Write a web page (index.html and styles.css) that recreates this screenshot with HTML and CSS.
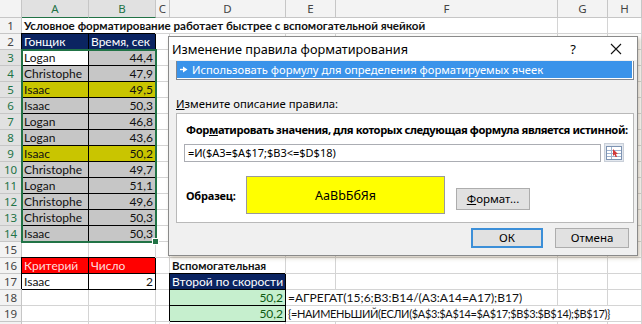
FILE: index.html
```html
<!DOCTYPE html>
<html lang="ru">
<head>
    <meta charset="UTF-8">
    <title>Изменение правила форматирования</title>
    <link rel="stylesheet" href="styles.css">
</head>
<body>
    <div class="wrap">
        <div class="sheet">
            <!-- column headers -->
            <div class="ch corner"></div>
            <div class="ch sel">A</div>
            <div class="ch sel">B</div>
            <div class="ch">C</div>
            <div class="ch">D</div>
            <div class="ch">E</div>
            <div class="ch">F</div>
            <div class="ch">G</div>
            <div class="ch">H</div>

            <!-- 1 -->
            <div class="rh">1</div>
            <div class="c bold heading span6">Условное форматирование работает быстрее с вспомогательной ячейкой</div>
            <div class="c"></div><div class="c"></div>

            <!-- 2 -->
            <div class="rh">2</div>
            <div class="c bd navy">Гонщик</div>
            <div class="c bd navy">Время, сек</div>
            <div class="c"></div><div class="c"></div><div class="c"></div><div class="c"></div><div class="c"></div><div class="c"></div>

            <!-- 3 -->
            <div class="rh on">3</div>
            <div class="c bd">Logan</div>
            <div class="c bd gray num">44,4</div>
            <div class="c"></div><div class="c"></div><div class="c"></div><div class="c"></div><div class="c"></div><div class="c"></div>

            <div class="rh on">4</div>
            <div class="c bd gray">Christophe</div>
            <div class="c bd gray num">47,9</div>
            <div class="c"></div><div class="c"></div><div class="c"></div><div class="c"></div><div class="c"></div><div class="c"></div>

            <div class="rh on">5</div>
            <div class="c bd hit">Isaac</div>
            <div class="c bd hit num">49,5</div>
            <div class="c"></div><div class="c"></div><div class="c"></div><div class="c"></div><div class="c"></div><div class="c"></div>

            <div class="rh on">6</div>
            <div class="c bd gray">Isaac</div>
            <div class="c bd gray num">50,3</div>
            <div class="c"></div><div class="c"></div><div class="c"></div><div class="c"></div><div class="c"></div><div class="c"></div>

            <div class="rh on">7</div>
            <div class="c bd gray">Logan</div>
            <div class="c bd gray num">46,8</div>
            <div class="c"></div><div class="c"></div><div class="c"></div><div class="c"></div><div class="c"></div><div class="c"></div>

            <div class="rh on">8</div>
            <div class="c bd gray">Logan</div>
            <div class="c bd gray num">43,6</div>
            <div class="c"></div><div class="c"></div><div class="c"></div><div class="c"></div><div class="c"></div><div class="c"></div>

            <div class="rh on">9</div>
            <div class="c bd hit">Isaac</div>
            <div class="c bd hit num">50,2</div>
            <div class="c"></div><div class="c"></div><div class="c"></div><div class="c"></div><div class="c"></div><div class="c"></div>

            <div class="rh on">10</div>
            <div class="c bd gray">Christophe</div>
            <div class="c bd gray num">49,7</div>
            <div class="c"></div><div class="c"></div><div class="c"></div><div class="c"></div><div class="c"></div><div class="c"></div>

            <div class="rh on">11</div>
            <div class="c bd gray">Logan</div>
            <div class="c bd gray num">51,1</div>
            <div class="c"></div><div class="c"></div><div class="c"></div><div class="c"></div><div class="c"></div><div class="c"></div>

            <div class="rh on">12</div>
            <div class="c bd gray">Christophe</div>
            <div class="c bd gray num">49,6</div>
            <div class="c"></div><div class="c"></div><div class="c"></div><div class="c"></div><div class="c"></div><div class="c"></div>

            <div class="rh on">13</div>
            <div class="c bd gray">Christophe</div>
            <div class="c bd gray num">50,3</div>
            <div class="c"></div><div class="c"></div><div class="c"></div><div class="c"></div><div class="c"></div><div class="c"></div>

            <div class="rh on">14</div>
            <div class="c bd gray">Isaac</div>
            <div class="c bd gray num">50,3</div>
            <div class="c"></div><div class="c"></div><div class="c"></div><div class="c"></div><div class="c"></div><div class="c"></div>

            <!-- 15 -->
            <div class="rh">15</div>
            <div class="c"></div><div class="c"></div><div class="c"></div><div class="c"></div><div class="c"></div><div class="c"></div><div class="c"></div><div class="c"></div>

            <!-- 16 -->
            <div class="rh">16</div>
            <div class="c bd red">Критерий</div>
            <div class="c bd red">Число</div>
            <div class="c"></div>
            <div class="c bold">Вспомогательная</div>
            <div class="c"></div><div class="c"></div><div class="c"></div><div class="c"></div>

            <!-- 17 -->
            <div class="rh">17</div>
            <div class="c bd">Isaac</div>
            <div class="c bd num">2</div>
            <div class="c"></div>
            <div class="c bd navy">Второй по скорости</div>
            <div class="c"></div><div class="c"></div><div class="c"></div><div class="c"></div>

            <!-- 18 -->
            <div class="rh">18</div>
            <div class="c"></div><div class="c"></div><div class="c"></div>
            <div class="c bd good num">50,2</div>
            <div class="c span2">=АГРЕГАТ(15;6;B3:B14/(A3:A14=A17);B17)</div>
            <div class="c"></div><div class="c"></div>

            <!-- 19 -->
            <div class="rh">19</div>
            <div class="c"></div><div class="c"></div><div class="c"></div>
            <div class="c bd good num">50,2</div>
            <div class="c span4 long">{=НАИМЕНЬШИЙ(ЕСЛИ($A$3:$A$14=$A$17;$B$3:$B$14);$B$17)}</div>

            <!-- 20 -->
            <div class="rh"></div>
            <div class="c"></div><div class="c"></div><div class="c"></div><div class="c"></div><div class="c"></div><div class="c"></div><div class="c"></div><div class="c"></div>
        </div>

        <div class="selection"><span class="handle"></span></div>

        <div class="dialog">
            <div class="titlebar">
                <span class="title">Изменение правила форматирования</span>
                <span class="help">?</span>
                <svg class="close" width="12" height="12" viewBox="0 0 12 12">
                    <path d="M1 1 L11 11 M11 1 L1 11" stroke="#111" stroke-width="1.1" fill="none"/>
                </svg>
            </div>
            <div class="body">
                <div class="listbox">
                    <div class="rule-item">
                        <svg class="arrow" width="8" height="7" viewBox="0 0 8 7">
                            <path d="M0 3.5 H4" stroke="#fff" stroke-width="1.4"/>
                            <path d="M3 0.5 L7.5 3.5 L3 6.5 Z" fill="#fff"/>
                        </svg>
                        Использовать формулу для определения форматируемых ячеек
                    </div>
                </div>
                <div class="caption"><u>И</u>змените описание правила:</div>
                <div class="panel">
                    <div class="panel-label">Фор<u>м</u>атировать значения, для которых следующая формула является истинной:</div>
                    <div class="formula-row">
                        <div class="formula">=И($A3=$A$17;$B3&lt;=$D$18)</div>
                        <div class="pick">
                            <svg width="16" height="14" viewBox="0 0 16 14">
                                <rect x="0.5" y="0.5" width="15" height="13" fill="#fff" stroke="#7d93b2"/>
                                <path d="M1 4.5 H15 M1 7.5 H15 M1 10.5 H15 M5.5 1 V13" stroke="#9fb3cf" stroke-width="1"/>
                                <path d="M7 3 L12 8 L10 8 L11 11 L9.5 11 L8.5 8.5 L7 10 Z" fill="#d23a3a"/>
                            </svg>
                        </div>
                    </div>
                    <div class="sample-row">
                        <span class="sample-label">Образец:</span>
                        <div class="sample">AaBbБбЯя</div>
                        <div class="btn format"><u>Ф</u>ормат...</div>
                    </div>
                </div>
                <div class="buttons">
                    <div class="btn ok">ОК</div>
                    <div class="btn cancel">Отмена</div>
                </div>
            </div>
        </div>
    </div>
</body>
</html>
```

FILE: styles.css
```css
body {
    margin: 0;
    background: #ffffff;
    overflow: hidden;
}

.wrap {
    position: relative;
    width: 642px;
    height: 324px;
    overflow: hidden;
}

/* ---------- sheet ---------- */

.sheet {
    display: grid;
    grid-template-columns: 22px 67px 67px 14px 116px 50px 222px 50px 1fr;
    grid-template-rows: 18px;
    grid-auto-rows: 16px;
    font-family: Lato, "Noto Sans", sans-serif;
    font-size: 12px;
    color: #111111;
}

.ch, .rh, .c {
    box-sizing: border-box;
    border-right: 1px solid #d4d4d4;
    border-bottom: 1px solid #d4d4d4;
    white-space: nowrap;
    overflow: hidden;
}

.ch {
    background: #f3f3f3;
    border-color: #c6c6c6;
    color: #444444;
    text-align: center;
    font-family: "Noto Sans", sans-serif;
    font-size: 11.5px;
    line-height: 17px;
}

.ch.sel {
    background: #e1e1e1;
    color: #217346;
    border-bottom: 1px solid #217346;
}

.rh {
    background: #f3f3f3;
    border-color: #c6c6c6;
    color: #444444;
    text-align: center;
    font-family: "Noto Sans", sans-serif;
    font-size: 11.5px;
    line-height: 15px;
}

.rh.on {
    background: #e1e1e1;
    color: #217346;
}

.c {
    padding: 0 2px;
    line-height: 15px;
}

.bold {
    font-weight: bold;
    font-size: 11.5px;
}

.num { text-align: right; }

.heading {
    font-size: 11.6px;
}

.long {
    font-size: 11px;
    letter-spacing: -0.35px;
}

.span6 { grid-column: span 6; }
.span4 { grid-column: span 4; }
.span2 { grid-column: span 2; }

/* bordered table cells */
.bd {
    border-right: 1px solid #000;
    border-bottom: 1px solid #000;
    box-shadow: -1px -1px 0 #000;
}

.navy { background: #0b2461; color: #ffffff; }
.gray { background: #c6c6c6; }
.hit { background: #c9c500; }
.red { background: #ff0000; color: #ffdcdc; }
.good { background: #c6efce; color: #0f5a12; }

.selection {
    position: absolute;
    left: 21px;
    top: 49px;
    width: 136px;
    height: 194px;
    box-sizing: border-box;
    border: 2px solid #217346;
}

.handle {
    position: absolute;
    right: -4px;
    bottom: -4px;
    width: 5px;
    height: 5px;
    background: #217346;
    border: 1px solid #ffffff;
}

/* ---------- dialog ---------- */

.dialog {
    position: absolute;
    left: 168px;
    top: 36px;
    width: 470px;
    height: 220px;
    box-sizing: border-box;
    border: 1px solid #8a8a8a;
    background: #f0f0f0;
    box-shadow: 2px 2px 4px rgba(120, 100, 60, 0.35);
    font-family: "Noto Sans", sans-serif;
    font-size: 11.5px;
    color: #000;
    display: flex;
    flex-direction: column;
}

.titlebar {
    height: 23px;
    background: #ffffff;
    display: flex;
    align-items: center;
    padding-left: 3px;
}

.title {
    flex: 1;
    font-size: 12.7px;
}

.help {
    font-size: 13px;
    margin-right: 34px;
}

.close {
    margin-right: 15px;
}

.body {
    flex: 1;
    padding: 1px 3px 0 7px;
    display: flex;
    flex-direction: column;
}

.listbox {
    height: 19px;
    box-sizing: border-box;
    border: 1px solid #828790;
    border-top: none;
    background: #ffffff;
}

.rule-item {
    height: 17px;
    margin-right: 1px;
    background: #3a93ea;
    color: #ffffff;
    line-height: 17px;
    padding-left: 3px;
    font-size: 11.2px;
    white-space: nowrap;
    display: flex;
    align-items: center;
    gap: 4px;
}

.caption {
    margin-top: 16px;
    line-height: 16px;
    font-size: 11.3px;
}

.panel {
    margin-top: 1px;
    height: 110px;
    box-sizing: border-box;
    border: 1px solid #b9b9b9;
    background: #ffffff;
    padding: 8px 0 0 7px;
}

.panel-label {
    margin-left: 2px;
    font-weight: bold;
    line-height: 16px;
    white-space: nowrap;
    font-size: 11.2px;
    letter-spacing: -0.4px;
}

.formula-row {
    display: flex;
    gap: 3px;
    margin-top: 6px;
}

.formula {
    width: 417px;
    height: 18px;
    box-sizing: border-box;
    border: 1px solid #abadb3;
    padding-left: 3px;
    line-height: 16px;
    font-size: 11px;
}

.pick {
    width: 20px;
    height: 19px;
    margin-top: -1px;
    box-sizing: border-box;
    border: 1px solid #c9cfd8;
    background: #e3e8ef;
    display: flex;
    align-items: center;
    justify-content: center;
}

.sample-row {
    display: flex;
    align-items: center;
    margin-top: 14px;
}

.sample-label {
    width: 60px;
    margin-left: 2px;
    font-weight: bold;
    font-size: 11px;
    letter-spacing: -0.2px;
}

.sample {
    width: 199px;
    height: 38px;
    box-sizing: border-box;
    border: 1px solid #9a9a9a;
    background: #ffff00;
    display: flex;
    align-items: center;
    justify-content: center;
    font-size: 12.5px;
}

.btn {
    box-sizing: border-box;
    border: 1px solid #adadad;
    background: #e1e1e1;
    text-align: center;
    font-size: 11.5px;
}

.format {
    width: 74px;
    height: 22px;
    line-height: 20px;
    margin-left: 11px;
    margin-top: 8px;
}

.buttons {
    display: flex;
    justify-content: flex-end;
    gap: 12px;
    margin-top: 5px;
    padding-right: 5px;
}

.ok, .cancel {
    height: 20px;
    line-height: 18px;
}

.ok {
    width: 72px;
    border: 2px solid #3c8fd8;
    line-height: 16px;
}

.cancel {
    width: 74px;
}
```
